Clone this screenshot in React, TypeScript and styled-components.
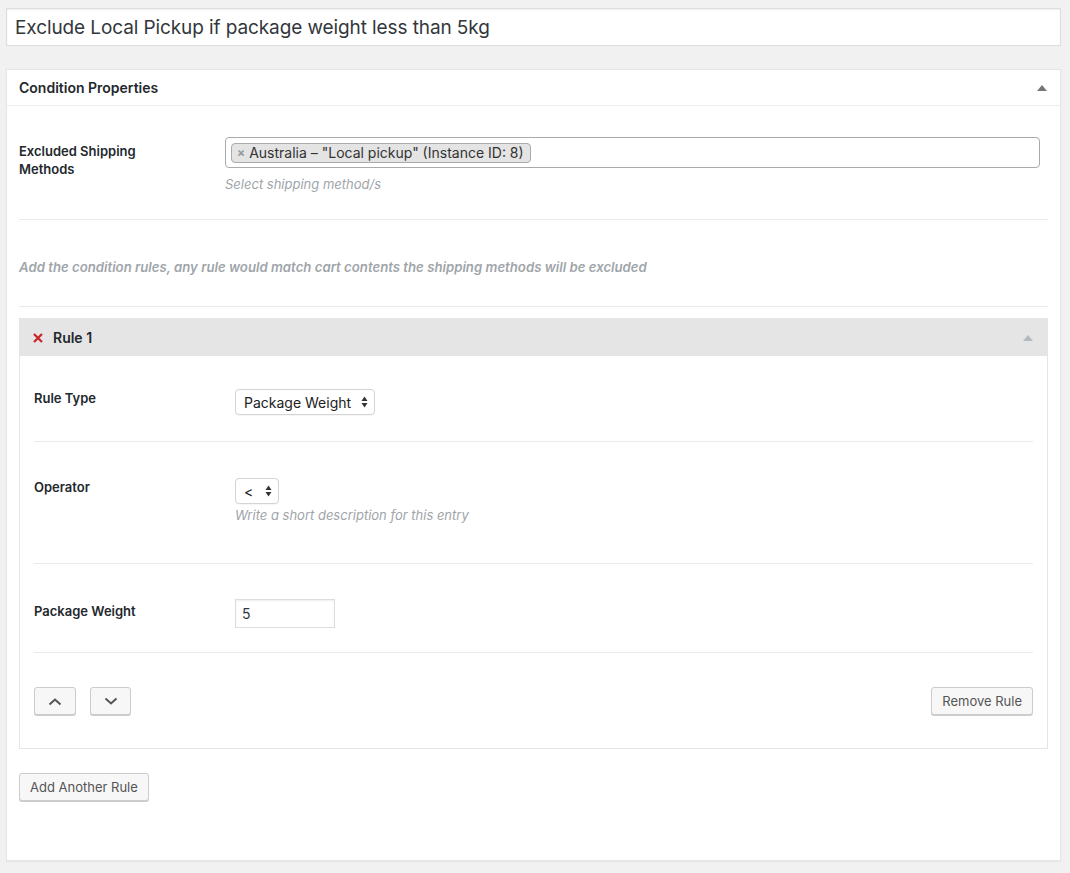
import React from "react";
import styled, { createGlobalStyle } from "styled-components";

const Global = createGlobalStyle`
  html, body { margin: 0; padding: 0; background: #f1f1f1; }
  body { font-family: Inter, "Open Sans", "Liberation Sans", sans-serif; color: #23282d; font-size: 13px; }
  * { box-sizing: border-box; }
`;

const Page = styled.div`
  padding: 8px 9px 13px 6px;
  display: flex;
  flex-direction: column;
  gap: 23px;
`;

const TitleInput = styled.div`
  height: 38px;
  background: #fff;
  border: 1px solid #ddd;
  box-shadow: inset 0 1px 2px rgba(0,0,0,.07);
  display: flex;
  align-items: center;
  padding: 0 8px;
  font-size: 19px;
  color: #32373c;
  letter-spacing: -0.1px;
`;

const Postbox = styled.div`
  background: #fff;
  border: 1px solid #e5e5e5;
  box-shadow: 0 1px 1px rgba(0,0,0,.04);
`;

const PostboxHeader = styled.div`
  height: 36px;
  border-bottom: 1px solid #eee;
  display: flex;
  align-items: center;
  justify-content: space-between;
  padding: 0 13px 0 12px;
  font-size: 14px;
  font-weight: 600;
`;

const Triangle = styled.span<{ $color: string }>`
  width: 0;
  height: 0;
  border-left: 5px solid transparent;
  border-right: 5px solid transparent;
  border-bottom: 6px solid ${(p) => p.$color};
`;

const Body = styled.div`
  padding: 0 12px 59px;
`;

const FieldRow = styled.div<{ $pad: string; $labelWidth: number; $border?: boolean }>`
  display: grid;
  grid-template-columns: ${(p) => p.$labelWidth}px 1fr;
  padding: ${(p) => p.$pad};
  border-bottom: ${(p) => (p.$border ? "1px solid #eaeaea" : "none")};
`;

const Label = styled.div<{ $offset?: number }>`
  font-weight: 600;
  font-size: 13px;
  line-height: 18px;
  padding-top: ${(p) => p.$offset ?? 0}px;
`;

const Field = styled.div<{ $right?: number }>`
  display: flex;
  flex-direction: column;
  align-items: flex-start;
  padding-right: ${(p) => p.$right ?? 0}px;
`;

const Description = styled.div<{ $gap?: number }>`
  font-style: italic;
  color: #a0a5aa;
  font-size: 13px;
  line-height: 16px;
  margin-top: ${(p) => p.$gap ?? 8}px;
`;

const MultiSelect = styled.div`
  width: 100%;
  height: 31px;
  border: 1px solid #aaa;
  border-radius: 4px;
  background: #fff;
  display: flex;
  align-items: center;
  padding: 0 5px;
`;

const Tag = styled.span`
  display: inline-flex;
  align-items: center;
  gap: 4px;
  height: 20px;
  padding: 0 6px 0 5px;
  background: #e4e4e4;
  border: 1px solid #aaa;
  border-radius: 4px;
  font-size: 14px;
  color: #333;
`;

const TagX = styled.span`
  color: #999;
  font-size: 12px;
  font-weight: 700;
`;

const Intro = styled.div`
  padding: 38px 0 30px;
  border-bottom: 1px solid #eaeaea;
  font-style: italic;
  font-weight: 600;
  color: #a0a5aa;
  font-size: 13.2px;
  line-height: 18px;
`;

const RuleBox = styled.div`
  margin-top: 11px;
  border: 1px solid #e5e5e5;
`;

const RuleHeader = styled.div`
  height: 37px;
  background: #e5e5e5;
  display: flex;
  align-items: center;
  padding: 0 14px 0 11px;
  gap: 8px;
  font-size: 14px;
  font-weight: 600;
`;

const RemoveX = styled.span`
  width: 14px;
  display: inline-flex;
  justify-content: center;
  align-items: center;
`;

const RuleTitle = styled.span`
  flex: 1;
`;

const RuleBody = styled.div`
  padding: 0 14px;
`;

const SelectBox = styled.div<{ $width: number }>`
  width: ${(p) => p.$width}px;
  height: 26px;
  border: 1px solid #d4d4d4;
  border-radius: 4px;
  background: #fff;
  display: flex;
  align-items: center;
  justify-content: space-between;
  padding: 0 6px 0 8px;
  font-size: 14px;
  color: #222;
  box-shadow: 0 1px 1px rgba(0,0,0,.04);
`;

const TextInput = styled.div`
  width: 100px;
  height: 29px;
  border: 1px solid #ddd;
  box-shadow: inset 0 1px 2px rgba(0,0,0,.07);
  display: flex;
  align-items: center;
  padding: 0 6px;
  font-size: 14px;
  color: #32373c;
`;

const RuleFooter = styled.div`
  display: flex;
  align-items: center;
  padding: 34px 0 33px;
  gap: 14px;
`;

const Button = styled.button<{ $push?: boolean; $width?: number }>`
  height: 28px;
  ${(p) => (p.$width ? `width: ${p.$width}px;` : "")}
  padding: 0 10px;
  margin-left: ${(p) => (p.$push ? "auto" : "0")};
  background: #f7f7f7;
  border: 1px solid #ccc;
  border-radius: 3px;
  box-shadow: 0 1px 0 #ccc;
  color: #555;
  font-family: inherit;
  font-size: 13px;
  display: inline-flex;
  align-items: center;
  justify-content: center;
  cursor: pointer;
`;

const AddWrap = styled.div`
  margin-top: 24px;
`;

const Updown = () => (
  <svg width="7" height="12" viewBox="0 0 7 12">
    <path d="M3.5 0.5 L6.5 5 L0.5 5 Z" fill="#333" />
    <path d="M3.5 11.5 L6.5 7 L0.5 7 Z" fill="#333" />
  </svg>
);

const Chevron = ({ up }: { up?: boolean }) => (
  <svg width="14" height="9" viewBox="0 0 14 9">
    <path
      d={up ? "M1.5 7.5 L7 2.5 L12.5 7.5" : "M1.5 1.5 L7 6.5 L12.5 1.5"}
      fill="none"
      stroke="#555"
      strokeWidth="2"
    />
  </svg>
);

const Cross = () => (
  <svg width="10" height="10" viewBox="0 0 10 10">
    <path d="M1 1 L9 9 M9 1 L1 9" stroke="#c9222a" strokeWidth="2.2" />
  </svg>
);

export default function App() {
  return (
    <>
      <Global />
      <Page>
        <TitleInput>Exclude Local Pickup if package weight less than 5kg</TitleInput>
        <Postbox>
          <PostboxHeader>
            <span>Condition Properties</span>
            <Triangle $color="#72777c" />
          </PostboxHeader>
          <Body>
            <FieldRow $pad="31px 0 27px" $labelWidth={206} $border>
              <Label $offset={5}>
                Excluded Shipping
                <br />
                Methods
              </Label>
              <Field $right={8}>
                <MultiSelect>
                  <Tag>
                    <TagX>×</TagX>
                    Australia – "Local pickup" (Instance ID: 8)
                  </Tag>
                </MultiSelect>
                <Description>Select shipping method/s</Description>
              </Field>
            </FieldRow>
            <Intro>
              Add the condition rules, any rule would match cart contents the shipping methods will be excluded
            </Intro>
            <RuleBox>
              <RuleHeader>
                <RemoveX>
                  <Cross />
                </RemoveX>
                <RuleTitle>Rule 1</RuleTitle>
                <Triangle $color="#b4b9be" />
              </RuleHeader>
              <RuleBody>
                <FieldRow $pad="33px 0 26px" $labelWidth={201} $border>
                  <Label>Rule Type</Label>
                  <Field>
                    <SelectBox $width={140}>
                      <span>Package Weight</span>
                      <Updown />
                    </SelectBox>
                  </Field>
                </FieldRow>
                <FieldRow $pad="36px 0 40px" $labelWidth={201} $border>
                  <Label>Operator</Label>
                  <Field>
                    <SelectBox $width={44}>
                      <span>&lt;</span>
                      <Updown />
                    </SelectBox>
                    <Description $gap={3}>Write a short description for this entry</Description>
                  </Field>
                </FieldRow>
                <FieldRow $pad="35px 0 24px" $labelWidth={201} $border>
                  <Label $offset={3}>Package Weight</Label>
                  <Field>
                    <TextInput>5</TextInput>
                  </Field>
                </FieldRow>
                <RuleFooter>
                  <Button $width={42} aria-label="Move up">
                    <Chevron up />
                  </Button>
                  <Button $width={41} aria-label="Move down">
                    <Chevron />
                  </Button>
                  <Button $push>Remove Rule</Button>
                </RuleFooter>
              </RuleBody>
            </RuleBox>
            <AddWrap>
              <Button>Add Another Rule</Button>
            </AddWrap>
          </Body>
        </Postbox>
      </Page>
    </>
  );
}
